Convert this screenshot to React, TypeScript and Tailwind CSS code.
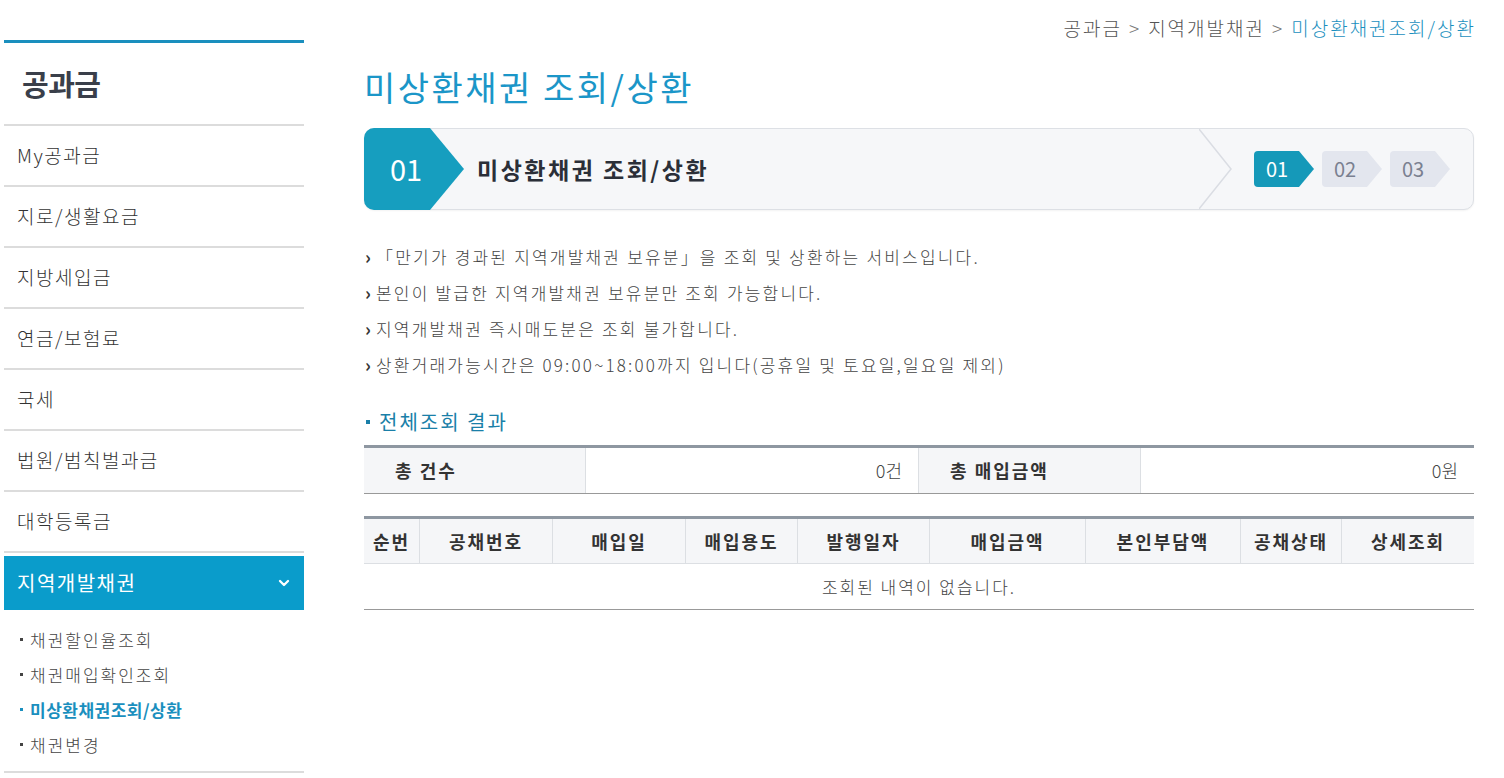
import React from 'react';
import { ChevronDown } from 'lucide-react';

const font = { fontFamily: '"Noto Sans CJK KR", "Noto Sans", sans-serif' };

const menu = ['My공과금', '지로/생활요금', '지방세입금', '연금/보험료', '국세', '법원/범칙벌과금', '대학등록금'];
const subMenu = ['채권할인율조회', '채권매입확인조회', '미상환채권조회/상환', '채권변경'];

const notices = [
  '「만기가 경과된 지역개발채권 보유분」을 조회 및 상환하는 서비스입니다.',
  '본인이 발급한 지역개발채권 보유분만 조회 가능합니다.',
  '지역개발채권 즉시매도분은 조회 불가합니다.',
  '상환거래가능시간은 09:00~18:00까지 입니다(공휴일 및 토요일,일요일 제외)',
];

const columns = [
  { label: '순번', w: 'w-[55px]' },
  { label: '공채번호', w: 'w-[133px]' },
  { label: '매입일', w: 'w-[133px]' },
  { label: '매입용도', w: 'w-[112px]' },
  { label: '발행일자', w: 'w-[132px]' },
  { label: '매입금액', w: 'w-[156px]' },
  { label: '본인부담액', w: 'w-[155px]' },
  { label: '공채상태', w: 'w-[101px]' },
  { label: '상세조회', w: 'flex-1' },
];

const StepBadge = ({ n, active }: { n: string; active?: boolean }) => (
  <div
    className={`w-[60px] h-[36px] flex items-center pl-[12px] text-[20px] rounded-l-[4px] [clip-path:polygon(0_0,75%_0,100%_50%,75%_100%,0_100%)] ${
      active ? 'bg-[#1599b9] text-white' : 'bg-[#e3e6ee] text-[#7a8090]'
    }`}
  >
    {n}
  </div>
);

const Sidebar = () => (
  <aside className="w-[300px] ml-[4px] mt-[40px] shrink-0">
    <div className="border-t-[3px] border-[#1a8fbe] h-[84px] flex items-center pl-[18px]">
      <span className="text-[29px] font-bold text-[#3a3f4a] tracking-[-0.5px]">공과금</span>
    </div>
    {menu.map((m) => (
      <div key={m} className="border-t-2 border-[#dcdcdc] h-[61px] flex items-center pl-[13px] text-[19px] text-[#333] font-light tracking-[1.5px]">
        {m}
      </div>
    ))}
    <div className="border-t-2 border-[#dcdcdc] pt-[3px]">
      <div className="h-[54px] bg-[#0a9ccb] flex items-center justify-between pl-[13px] pr-[12px] text-white text-[20px] tracking-[1.5px]">
        <span>지역개발채권</span>
        <ChevronDown className="w-[16px] h-[16px]" strokeWidth={3.5} />
      </div>
    </div>
    <ul className="pt-[12px] pb-[9px] border-b-2 border-[#dcdcdc]">
      {subMenu.map((s, i) => (
        <li
          key={s}
          className={`h-[35px] flex items-center pl-[16px] text-[17px] ${i === 2 ? 'text-[#1a8fbe] font-bold tracking-[0.5px]' : 'text-[#444] font-light tracking-[2px]'}`}
        >
          <span className="w-[3px] h-[3px] bg-current mr-[7px]" />
          {s}
        </li>
      ))}
    </ul>
  </aside>
);

const StepBox = () => (
  <div className="relative h-[82px] rounded-[10px] border border-[#dde0e5] bg-[#f6f7f9] flex items-center shadow-[0_1px_2px_rgba(0,0,0,0.05)]">
    <div className="h-[82px] w-[100px] -ml-px bg-[#169ebf] rounded-l-[10px] [clip-path:polygon(0_0,66%_0,100%_50%,66%_100%,0_100%)] flex items-center pl-[26px] text-white text-[29px]">
      01
    </div>
    <span className="ml-[13px] text-[23px] font-bold text-[#2b2f38] tracking-[2.5px]">미상환채권 조회/상환</span>
    <svg className="absolute left-[834px] top-0 h-[80px] w-[40px]" viewBox="0 0 40 80">
      <polyline points="0,0 32,40 0,80" fill="none" stroke="#dadde3" strokeWidth="1.5" />
    </svg>
    <div className="ml-auto mr-[23px] flex gap-[8px]">
      <StepBadge n="01" active />
      <StepBadge n="02" />
      <StepBadge n="03" />
    </div>
  </div>
);

const App: React.FC = () => (
  <div className="w-[1504px] h-[778px] bg-white flex overflow-hidden" style={font}>
    <Sidebar />
    <main className="ml-[60px] w-[1110px]">
      <div className="h-[56px] flex items-center justify-end text-[19px] text-[#555] font-light tracking-[2px]">
        <span>공과금</span>
        <span className="mx-[7px] text-[#777]">&gt;</span>
        <span>지역개발채권</span>
        <span className="mx-[7px] text-[#777]">&gt;</span>
        <span className="text-[#1a8fbe] -mr-[2px]">미상환채권조회/상환</span>
      </div>
      <h1 className="h-[60px] flex items-center text-[34px] text-[#1b96c8] tracking-[2.5px]">미상환채권 조회/상환</h1>
      <div className="mt-[12px]">
        <StepBox />
      </div>

      <ul className="mt-[31px] space-y-[4px]">
        {notices.map((t) => (
          <li key={t} className="h-[32px] flex items-center text-[17px] text-[#444] font-light tracking-[2.2px]">
            <span className="text-[18px] font-bold text-[#333] w-[12px] pl-[1px] -mt-[2px]">›</span>
            {t}
          </li>
        ))}
      </ul>

      <div className="mt-[26px] flex items-center text-[20px] text-[#1a7fa8] tracking-[2px]">
        <span className="w-[4px] h-[4px] bg-[#1a7fa8] ml-[2px] mr-[9px]" />
        전체조회 결과
      </div>

      <div className="mt-[8px] border-t-[3px] border-[#8e97a1] border-b border-b-[#999] flex h-[49px] text-[18px]">
        <div className="w-[221px] bg-[#f5f6f8] flex items-center pl-[31px] text-[#333] font-bold tracking-[2px]">총 건수</div>
        <div className="w-[333px] border-l border-[#dcdfe3] flex items-center justify-end pr-[16px] text-[#444] font-light">0건</div>
        <div className="w-[222px] border-l border-[#dcdfe3] bg-[#f5f6f8] flex items-center pl-[31px] text-[#333] font-bold tracking-[2px]">총 매입금액</div>
        <div className="flex-1 border-l border-[#dcdfe3] flex items-center justify-end pr-[16px] text-[#444] font-light">0원</div>
      </div>

      <div className="mt-[22px] border-t-[3px] border-[#8e97a1] border-b border-b-[#999]">
        <div className="flex h-[45px] bg-[#f5f6f8] border-b border-[#dcdfe3] text-[18px] font-bold text-[#333] tracking-[2px]">
          {columns.map((c, i) => (
            <div key={c.label} className={`${c.w} flex items-center justify-center ${i > 0 ? 'border-l border-[#dcdfe3]' : ''}`}>
              {c.label}
            </div>
          ))}
        </div>
        <div className="h-[45px] flex items-center justify-center text-[17px] text-[#444] font-light tracking-[2px]">조회된 내역이 없습니다.</div>
      </div>
    </main>
  </div>
);

export default App;
